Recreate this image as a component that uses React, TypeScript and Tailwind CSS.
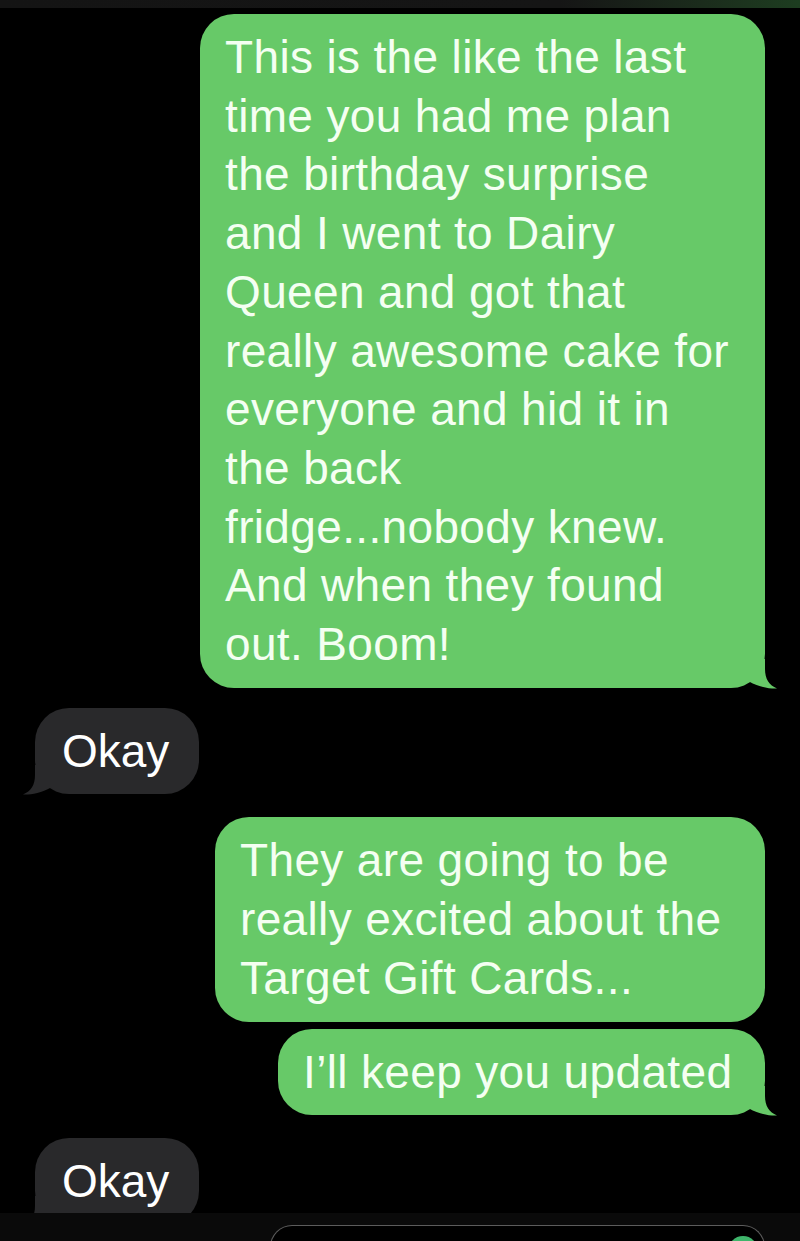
import React from "react";

const GREEN = "#67c968";
const GRAY = "#29292b";

function Tail({ color, side }: { color: string; side: "right" | "left" }) {
  return (
    <svg
      width="30"
      height="30"
      viewBox="0 0 30 30"
      className={
        side === "right"
          ? "absolute bottom-[-1px] right-[-12px]"
          : "absolute bottom-[-1px] left-[-12px] -scale-x-100"
      }
    >
      <path
        d="M0 0 H18 V10 C18 20 22 26 30 29.5 C23 30 12 28 2 22.5 L0 24 Z"
        fill={color}
      />
    </svg>
  );
}

function Sent({
  lines,
  width,
  tail = false,
}: {
  lines: string[];
  width?: string;
  tail?: boolean;
}) {
  return (
    <div
      className={`relative self-end mr-[35px] rounded-[34px] bg-[#67c968] pl-[25px] pr-[27px] py-[14px] text-[46px] leading-[58.7px] tracking-[0.35px] text-[#f4fff2] ${width ?? ""}`}
    >
      {lines.map((l) => (
        <div key={l} className="whitespace-nowrap">
          {l}
        </div>
      ))}
      {tail && <Tail color={GREEN} side="right" />}
    </div>
  );
}

function Received({ text }: { text: string }) {
  return (
    <div className="relative self-start ml-[35px] rounded-[34px] bg-[#29292b] pl-[27px] pr-[30px] py-[14px] text-[46px] leading-[58.7px] text-white">
      <div className="whitespace-nowrap">{text}</div>
      <Tail color={GRAY} side="left" />
    </div>
  );
}

export default function App() {
  return (
    <div
      className="flex h-[1241px] w-[800px] flex-col overflow-hidden bg-black"
      style={{ fontFamily: '"Liberation Sans", Arial, sans-serif' }}
    >
      <div className="h-[8px] shrink-0 bg-gradient-to-r from-[#141414] via-[#151515] via-70% to-[#1d3d20]" />

      <div className="flex min-h-0 flex-1 flex-col overflow-hidden pt-[6px]">
        <Sent
          width="w-[565px]"
          tail
          lines={[
            "This is the like the last",
            "time you had me plan",
            "the birthday surprise",
            "and I went to Dairy",
            "Queen and got that",
            "really awesome cake for",
            "everyone and hid it in",
            "the back",
            "fridge...nobody knew.",
            "And when they found",
            "out. Boom!",
          ]}
        />

        <div className="mt-[20px] flex flex-col">
          <Received text="Okay" />
        </div>

        <div className="mt-[23px] flex flex-col gap-[7px]">
          <Sent
            width="w-[550px]"
            lines={[
              "They are going to be",
              "really excited about the",
              "Target Gift Cards...",
            ]}
          />
          <Sent tail width="w-[487px]" lines={["I’ll keep you updated"]} />
        </div>

        <div className="mt-[23px] flex flex-col">
          <Received text="Okay" />
        </div>
      </div>

      <div className="relative h-[28px] shrink-0 bg-[#0a0a0a] pt-[12px]">
        <div className="ml-[270px] h-[30px] w-[495px] rounded-t-[22px] border border-b-0 border-[#5c5c5c] bg-black">
          <div className="ml-auto mr-[6px] mt-[10px] h-[30px] w-[30px] rounded-full bg-[#3fb56b]" />
        </div>
      </div>
    </div>
  );
}
